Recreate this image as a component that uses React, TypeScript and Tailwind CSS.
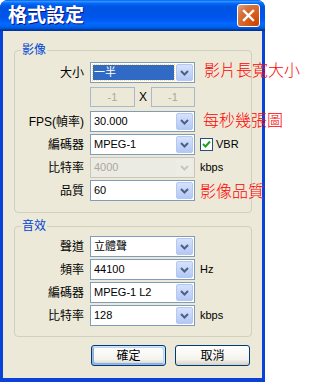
import React from 'react';

type ComboProps = {
  value: string;
  disabled?: boolean;
  selected?: boolean;
};

const Chevron: React.FC<{ disabled?: boolean }> = ({ disabled }) => (
  <svg width="9" height="6" viewBox="0 0 9 6">
    <path d="M1 1 L4.5 4.5 L8 1" fill="none" stroke={disabled ? '#C9C7BA' : '#4D6185'} strokeWidth="2" />
  </svg>
);

const Combo: React.FC<ComboProps> = ({ value, disabled, selected }) => (
  <div
    className={`flex h-[21px] w-[105px] items-center border ${
      disabled ? 'border-[#C9C7BA] bg-[#EBEBE4] text-[#ACA899]' : 'border-[#7F9DB9] bg-white text-black'
    }`}
  >
    <div className="flex h-full min-w-0 flex-1 items-center pl-[2px] pr-[2px]">
      {selected ? (
        <span className="flex h-[15px] w-full items-center bg-[#316AC5] pl-[1px] text-white outline-1 outline-dotted outline-[#FFD46E]">
          {value}
        </span>
      ) : (
        <span className="pl-[1px]">{value}</span>
      )}
    </div>
    <div
      className={`mr-[1px] flex h-[17px] w-[17px] items-center justify-center rounded-[2px] ${
        disabled
          ? 'bg-[#EEEDE5]'
          : 'border border-[#B5C8F3] bg-[linear-gradient(to_bottom,#D6E2FC,#B4C8F5)]'
      }`}
    >
      <Chevron disabled={disabled} />
    </div>
  </div>
);

const Row: React.FC<{ label: string; children: React.ReactNode; extra?: React.ReactNode }> = ({ label, children, extra }) => (
  <>
    <div className="flex h-[21px] items-center justify-end pr-[6px] text-[12px]">{label}</div>
    <div>{children}</div>
    <div className="flex h-[21px] items-center pl-[5px]">{extra}</div>
  </>
);

const XpButton: React.FC<{ label: string; isDefault?: boolean }> = ({ label, isDefault }) => (
  <button
    className={`flex h-[21px] w-[75px] items-center justify-center rounded-[3px] border border-[#003C74] bg-[linear-gradient(to_bottom,#FFFFFF,#F4F3EE_70%,#D6D0C5)] text-[12px] text-black ${
      isDefault ? 'shadow-[inset_-1px_1px_#CEE7FF,inset_1px_-1px_#98B8EA,inset_-2px_2px_#BCD4F6,inset_2px_-2px_#89ADE4]' : ''
    }`}
  >
    {label}
  </button>
);

export default function App() {
  return (
    <div className="relative h-[382px] w-[320px] overflow-hidden bg-white font-['Liberation_Sans','Noto_Sans_CJK_TC',sans-serif] text-[11px] text-black">
      <div className="flex h-[382px] w-[265px] flex-col rounded-t-[8px] bg-[#0842D8]">
        {/* title bar */}
        <div className="flex h-[31px] items-center justify-between rounded-t-[8px] bg-[linear-gradient(to_bottom,#0058EE_0%,#3593FF_4%,#288EFF_6%,#127DFF_8%,#036FFC_10%,#0262EE_14%,#0057E5_20%,#0054E3_24%,#0055EB_56%,#005BF5_66%,#026AFE_76%,#0062EF_86%,#0052D6_92%,#0040AB_94%,#003092_100%)] pl-[8px] pr-[5px]">
          <span className="text-[19px] font-bold leading-none text-white [text-shadow:1px_1px_#0F1089]">格式設定</span>
          <div className="flex h-[23px] w-[23px] items-center justify-center rounded-[3px] border border-white bg-[radial-gradient(circle_at_90%_90%,#CC4600_0%,#DC6527_55%,#CD7546_70%,#E8A282_100%)]">
            <svg width="13" height="13" viewBox="0 0 13 13">
              <path d="M2 2 L11 11 M11 2 L2 11" stroke="white" strokeWidth="2.4" strokeLinecap="square" />
            </svg>
          </div>
        </div>

        {/* body */}
        <div className="mx-[3px] mb-[4px] flex flex-1 flex-col bg-[#ECE9D8] px-[11px] pr-[10px]">
          <fieldset className="mt-[12px] rounded-[4px] border border-[#D0D0BF] pb-[11px]">
            <legend className="ml-[6px] px-[1px] text-[12px] leading-[14px] text-[#0046D5]">影像</legend>
            <div className="grid grid-cols-[75px_105px_1fr] pt-[5px]">
              <Row label="大小">
                <Combo value="一半" selected />
              </Row>
              <div className="col-span-3 h-[4px]" />
              <div />
              <div className="flex h-[20px] items-center justify-between text-[#ACA899]">
                <div className="flex h-[20px] w-[45px] items-center justify-center border border-[#A9B8CA] bg-[#ECE9D8]">-1</div>
                <span className="text-[12px] text-black">X</span>
                <div className="flex h-[20px] w-[44px] items-center justify-center border border-[#A9B8CA] bg-[#ECE9D8]">-1</div>
              </div>
              <div />
              <div className="col-span-3 h-[4px]" />
              <Row label="FPS(幀率)">
                <Combo value="30.000" />
              </Row>
              <div className="col-span-3 h-[2px]" />
              <Row
                label="編碼器"
                extra={
                  <div className="flex items-center gap-[3px]">
                    <div className="flex h-[13px] w-[13px] items-center justify-center border border-[#1C5180] bg-white">
                      <svg width="9" height="9" viewBox="0 0 9 9">
                        <path d="M1 4 L3.5 6.5 L8 1.5" fill="none" stroke="#21A121" strokeWidth="2" />
                      </svg>
                    </div>
                    <span>VBR</span>
                  </div>
                }
              >
                <Combo value="MPEG-1" />
              </Row>
              <div className="col-span-3 h-[2px]" />
              <Row label="比特率" extra={<span>kbps</span>}>
                <Combo value="4000" disabled />
              </Row>
              <div className="col-span-3 h-[2px]" />
              <Row label="品質">
                <Combo value="60" />
              </Row>
            </div>
          </fieldset>

          <fieldset className="mt-[6px] rounded-[4px] border border-[#D0D0BF] pb-[10px]">
            <legend className="ml-[6px] px-[1px] text-[12px] leading-[14px] text-[#0046D5]">音效</legend>
            <div className="grid grid-cols-[75px_105px_1fr] gap-y-[2px] pt-[3px]">
              <Row label="聲道">
                <Combo value="立體聲" />
              </Row>
              <Row label="頻率" extra={<span>Hz</span>}>
                <Combo value="44100" />
              </Row>
              <Row label="編碼器">
                <Combo value="MPEG-1 L2" />
              </Row>
              <Row label="比特率" extra={<span>kbps</span>}>
                <Combo value="128" />
              </Row>
            </div>
          </fieldset>

          <div className="mt-[8px] flex justify-end gap-[9px] pr-[2px]">
            <XpButton label="確定" isDefault />
            <XpButton label="取消" />
          </div>
        </div>
      </div>

      {/* red annotations drawn over the dialog */}
      <span className="absolute left-[204px] top-[62px] text-[16px] font-light leading-[18px] text-[#FF0000]">影片長寬大小</span>
      <span className="absolute left-[203px] top-[112px] text-[16px] font-light leading-[18px] text-[#FF0000]">每秒幾張圖</span>
      <span className="absolute left-[200px] top-[183px] text-[16px] font-light leading-[18px] text-[#FF0000]">影像品質</span>
    </div>
  );
}
